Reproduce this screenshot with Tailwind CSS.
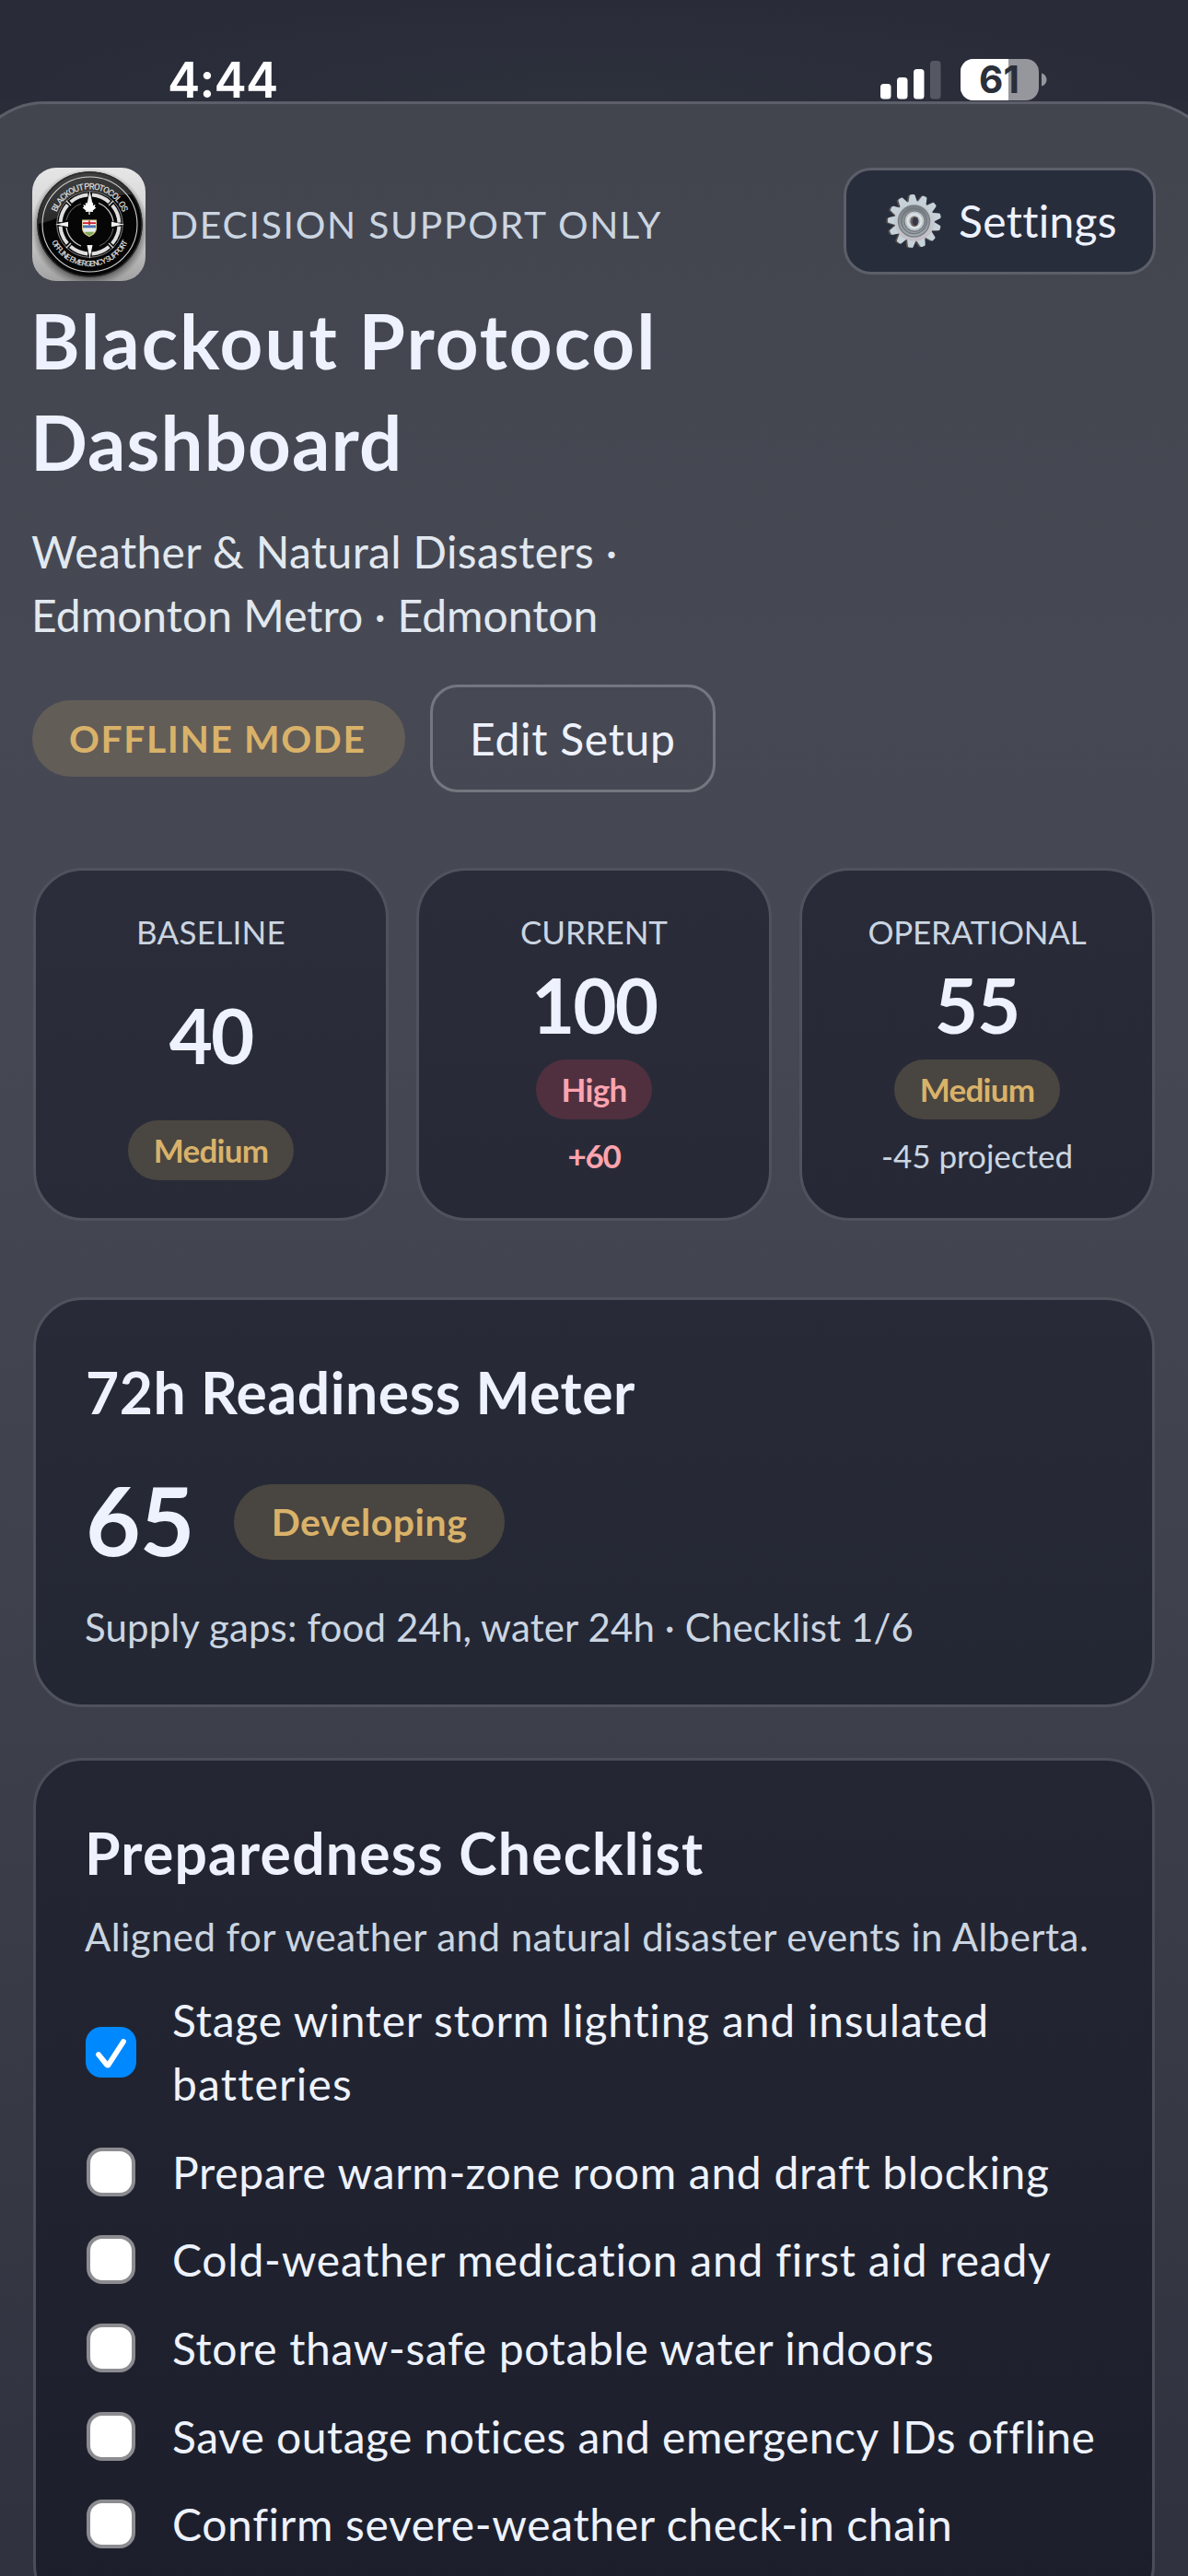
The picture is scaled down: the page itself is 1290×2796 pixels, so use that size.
<!DOCTYPE html>
<html lang="en">
<head>
<meta charset="utf-8">
<title>Blackout Protocol Dashboard</title>
<script src="https://cdn.jsdelivr.net/npm/@tailwindcss/browser@4"></script>
</head>
<body class="w-[1290px] h-[2796px] overflow-hidden bg-[linear-gradient(180deg,#2b2e39_0%,#1c1f2b_100%)] font-['Lato',sans-serif] text-[#eef2ff]">
<div class="w-[1290px] h-[2796px] overflow-hidden flex flex-col">

  <!-- Status bar -->
  <header class="h-[110px] shrink-0 flex items-end justify-between pl-[182px] pr-[152px] bg-[radial-gradient(ellipse_at_50%_100%,#2d313c_0%,#292c38_75%)]">
    <span class="font-['Inter',sans-serif] font-semibold text-[53px] leading-[46px] tracking-[-0.8px] text-white">4:44</span>
    <div class="flex items-end">
      <svg class="w-[66px] h-[42px] mb-[2.5px]" viewBox="0 0 66 42">
        <rect x="0" y="25" width="11.5" height="16.5" rx="3.5" fill="#fff"/>
        <rect x="18" y="18" width="11.5" height="23.5" rx="3.5" fill="#fff"/>
        <rect x="36" y="9" width="11.5" height="32.5" rx="3.5" fill="#fff"/>
        <rect x="54" y="0" width="11.5" height="41.5" rx="3.5" fill="#555862"/>
      </svg>
      <svg class="w-[95px] h-[45px] ml-[21px] mb-px" viewBox="0 0 95 45">
        <defs><clipPath id="bat"><rect width="85" height="45" rx="14"/></clipPath></defs>
        <g clip-path="url(#bat)"><rect width="85" height="45" fill="#95979d"/><rect width="52" height="45" fill="#fff"/></g>
        <path d="M88 15.5c3.5 1 5.500 4 5.500 7s-2 6-5.500 7z" fill="#95979d"/>
        <text x="42" y="37" text-anchor="middle" font-family="Inter" font-weight="700" font-size="40.500" fill="#2b2f3a">61</text>
      </svg>
    </div>
  </header>

  <!-- Sheet -->
  <main class="w-[1362px] h-[2900px] shrink-0 -ml-9 px-[69px] pt-[69px] rounded-t-[84px] border-[3px] border-[#5c5f69] bg-[linear-gradient(180deg,#42454e_0px,#464953_600px,#454852_1000px,#40434d_1500px,#3c3f49_1800px,#2f323e_2700px)]">
    <div class="w-[1219px]">

      <div class="flex items-start justify-between h-[123px] -ml-px">
        <div class="flex items-center gap-[26px]">
          <svg class="w-[123px] h-[123px]" viewBox="0 0 123 123">
            <defs>
              <linearGradient id="plate" x1="0" y1="0" x2="0" y2="1"><stop offset="0" stop-color="#e6e6e6"/><stop offset=".55" stop-color="#cfcfcf"/><stop offset="1" stop-color="#a2a2a2"/></linearGradient>
              <linearGradient id="gloss" x1="0" y1="0" x2=".5" y2="1"><stop offset="0" stop-color="#4a4a4a"/><stop offset="1" stop-color="#222"/></linearGradient>
              <radialGradient id="shade"><stop offset=".85" stop-color="#333" stop-opacity=".6"/><stop offset="1" stop-color="#555" stop-opacity="0"/></radialGradient>
              <clipPath id="sq"><rect width="123" height="123" rx="26"/></clipPath>
              <clipPath id="disc"><circle cx="62.500" cy="61.500" r="57"/></clipPath>
              <path id="arcT" d="M24.500 61.500a38 38 0 0 1 76 0"/>
              <path id="arcB" d="M16.900 61.500a45.600 45.600 0 0 0 91.200 0"/>
            </defs>
            <g clip-path="url(#sq)">
              <rect width="123" height="123" fill="url(#plate)"/>
              <circle cx="62.500" cy="65" r="64" fill="url(#shade)"/>
              <g clip-path="url(#disc)">
                <rect width="123" height="123" fill="#050505"/>
                <path d="M0 62C30 58 38 46 62 38S100 28 123 30V0H0z" fill="url(#gloss)"/>
              </g>
              <circle cx="62.500" cy="61.500" r="56.500" fill="none" stroke="#2a2a2a" stroke-width="1.500"/>
              <circle cx="62.500" cy="61.500" r="51.500" fill="none" stroke="#d2d2d2" stroke-width="1.100"/>
              <circle cx="62.500" cy="61.500" r="36.500" fill="#060606"/>
              <circle cx="62.500" cy="61.500" r="35.800" fill="none" stroke="#aaa" stroke-width=".8"/>
              <circle cx="62.500" cy="61.500" r="32" fill="none" stroke="#dedede" stroke-width="4" stroke-dasharray="20.600 4.530" stroke-dashoffset="-2.260"/>
              <g stroke="#ddd" stroke-width="1.400"><path d="M42 41l-5-5M83 41l5-5M42 82l-5 5M83 82l5 5"/></g>
              <path d="M72 38.500a25.500 25.500 0 0 1 16 20M53 85a25.500 25.500 0 0 1-16-20" fill="none" stroke="#ccc" stroke-width="1.300"/>
              <path d="M37 57a25.500 25.500 0 0 1 16-18M88 66a25.500 25.500 0 0 1-15 19" fill="none" stroke="#999" stroke-width=".7"/>
              <path d="M62.500 25l3 14h-6zM62.500 99l-3-15h6zM25 61.500l14-2.800v5.600zM100 61.500l-14-2.800v5.600z" fill="#f2f2f2"/>
              <path d="M62 35.500l2 3.200 2.200-.8-.3 3.200 2.600-1-.6 2.600 1.500.7-3.700 3.200.4 1.500-3.500-.4V51h-1.200v-3.300l-3.500.4.4-1.500-3.700-3.200 1.500-.7-.6-2.600 2.600 1-.3-3.200 2.200.8z" fill="#fff"/>
              <path d="M54 56.500h16v9c0 5-4 8-8 9.700-4-1.700-8-4.700-8-9.700z" fill="#d8c98a"/>
              <path d="M55 57.500h14v5H55z" fill="#f6eeee"/><path d="M55 59.300h14v1.600H55zM61.200 57.500h1.700v5h-1.700z" fill="#d01f2c"/>
              <path d="M55 62.500h14v3H55z" fill="#4d74b8"/><path d="M55 65.500h14c0 2-.6 3.200-1.500 4.300h-11c-.9-1.100-1.500-2.300-1.500-4.300z" fill="#e8eef2"/><path d="M56.700 69.800h10.700c-1.400 2-3.400 3.300-5.400 4.200-2-.9-4-2.200-5.300-4.200z" fill="#7fa85a"/>
              <g font-family="Roboto" font-weight="500" fill="#d4d4d4" text-anchor="middle">
                <text font-size="9.600"><textPath href="#arcT" startOffset="50%" textLength="93">BLACKOUT PROTOCOL OS</textPath></text>
                <text font-size="8.600"><textPath href="#arcB" startOffset="50%" textLength="104">OFFLINE EMERGENCY SUPPORT</textPath></text>
              </g>
            </g>
          </svg>
          <span class="text-[40.8px] leading-[60px] tracking-[1.75px] text-[#cbd5e1]">DECISION SUPPORT ONLY</span>
        </div>
        <button class="w-[339px] h-[116px] rounded-[30px] border-[3px] border-[#5c5f69] bg-[#282d3c] flex items-center pl-[43px]">
          <svg class="w-[60px] h-[60px] shrink-0" viewBox="0 0 60 60">
            <defs>
              <linearGradient id="metal" gradientUnits="userSpaceOnUse" x1="0" y1="0" x2="0" y2="60"><stop offset="0" stop-color="#c6d3da"/><stop offset=".5" stop-color="#c6cad1"/><stop offset="1" stop-color="#bfb8be"/></linearGradient>
              <linearGradient id="dish" x1="0" y1="0" x2="0" y2="1"><stop offset="0" stop-color="#777d82"/><stop offset="1" stop-color="#a3abb0"/></linearGradient>
              <linearGradient id="hub" x1="0" y1="0" x2="0" y2="1"><stop offset="0" stop-color="#c3c9ce"/><stop offset="1" stop-color="#b9c3ca"/></linearGradient>
              <g id="teeth"></g>
            </defs>
            <use href="#teeth" x="-1.800" y=".3" fill="#57514f"/>
            <use href="#teeth" fill="url(#metal)"/>
            <circle cx="31" cy="30" r="21.800" fill="url(#metal)"/>
            <circle cx="30.500" cy="30" r="17.800" fill="#7b8287"/>
            <circle cx="30.500" cy="30" r="16.300" fill="url(#dish)"/>
            <circle cx="30.500" cy="30" r="13.600" fill="none" stroke="#70777c" stroke-width="1.300"/>
            <circle cx="31" cy="30.500" r="11.300" fill="#6f7478"/>
            <circle cx="31" cy="30" r="10.500" fill="url(#hub)"/>
            <circle cx="31" cy="30" r="7.500" fill="none" stroke="#dfe4e8" stroke-width="2"/>
            <ellipse cx="31" cy="30.300" rx="4.600" ry="5.600" fill="#6d5f56"/>
            <ellipse cx="31.800" cy="30.300" rx="3" ry="4.400" fill="#34384a"/>
          </svg>
          <span class="ml-[19px] text-[48px] leading-[60px] tracking-[0.29px]">Settings</span>
        </button>
      </div>

      <h1 class="mt-[9px] -ml-[3px] text-[81.6px] leading-[110px] font-bold"><span class="tracking-[2px]">Blackout Protocol</span><br><span class="tracking-[1.09px]">Dashboard</span></h1>
      <p class="mt-[30px] -ml-[2px] text-[48px] leading-[69px] text-[#e2e8f0]"><span class="tracking-[0.34px]">Weather &amp; Natural Disasters ·</span><br><span class="tracking-[0.02px]">Edmonton Metro · Edmonton</span></p>

      <div class="mt-[41px] h-[117px] flex items-center gap-[27px]">
        <span class="w-[405px] h-[83px] -ml-px rounded-[42px] bg-[#635d58] flex items-center pl-[40px] text-[40.8px] font-bold tracking-[1.6px] text-[#d9b26a]">OFFLINE MODE</span>
        <button class="w-[310px] h-[117px] rounded-[30px] border-[3px] border-[#74777f] flex items-center pl-[40px] text-[48px] tracking-[0.71px]">Edit Setup</button>
      </div>

      <section class="mt-[82px] grid grid-cols-3 gap-[30px] w-[1218px] h-[383px] text-center text-[35px] leading-[42px]">
        <div class="rounded-[54px] border-[3px] border-[#50535e] bg-[linear-gradient(180deg,#2b2e3a,#282b37)] pt-[45px] flex flex-col items-center">
          <div class="tracking-[0.26px] text-[#cbd5e1]">BASELINE</div>
          <div class="mt-[50px] text-[81.600px] leading-[82px] font-bold tracking-[-2px]">40</div>
          <div class="mt-[52px] w-[180px] h-[65px] leading-[64px] rounded-full bg-[#4a4641] font-bold tracking-[-0.74px] text-[#d9b26a]">Medium</div>
        </div>
        <div class="rounded-[54px] border-[3px] border-[#50535e] bg-[linear-gradient(180deg,#2a2d39,#272a36)] pt-[45px] flex flex-col items-center">
          <div class="tracking-[-0.1px] text-[#cbd5e1]">CURRENT</div>
          <div class="mt-[17px] text-[81.600px] leading-[82px] font-bold tracking-[-2px]">100</div>
          <div class="mt-[19px] w-[126px] h-[65px] leading-[64px] rounded-full bg-[#50303f] font-bold tracking-[-0.7px] text-[#fda4af]">High</div>
          <div class="mt-[18px] font-bold tracking-[-1.3px] text-[#fda4af]">+60</div>
        </div>
        <div class="rounded-[54px] border-[3px] border-[#50535e] bg-[linear-gradient(180deg,#292c38,#262935)] pt-[45px] flex flex-col items-center">
          <div class="tracking-[-0.2px] text-[#cbd5e1]">OPERATIONAL</div>
          <div class="mt-[17px] text-[81.600px] leading-[82px] font-bold tracking-[-1px]">55</div>
          <div class="mt-[19px] w-[180px] h-[65px] leading-[64px] rounded-full bg-[#494540] font-bold tracking-[-0.74px] text-[#d9b26a]">Medium</div>
          <div class="mt-[18px] text-[#cbd5e1]">-45 projected</div>
        </div>
      </section>

      <section class="mt-[83px] w-[1218px] h-[445px] rounded-[54px] border-[3px] border-[#50535e] bg-[linear-gradient(180deg,#282b37,#232733)] pt-[58px] pl-[54px]">
        <h2 class="text-[62.400px] leading-[84px] font-bold tracking-[0.57px]">72h Readiness Meter</h2>
        <div class="mt-[57px] h-[83px] flex items-center">
          <span class="w-[161px] mt-[-4px] text-[103px] leading-[103px] font-bold tracking-[-1px]">65</span>
          <span class="w-[294px] h-[82px] rounded-full bg-[#494540] flex items-center justify-center text-[41px] font-bold tracking-[0.53px] text-[#d9b26a]">Developing</span>
        </div>
        <p class="mt-[43px] -ml-px text-[42px] leading-[60px] tracking-[0.12px] text-[#cbd5e1] whitespace-nowrap">Supply gaps: food 24h, water 24h · Checklist 1/6</p>
      </section>

      <section class="mt-[55px] w-[1218px] h-[930px] rounded-[54px] border-[3px] border-[#4b4e59] bg-[linear-gradient(180deg,#242733,#1c1f2b)] pt-[58px] pl-[54px]">
        <h2 class="text-[62.400px] leading-[84px] font-bold tracking-[1.22px] -ml-px">Preparedness Checklist</h2>
        <p class="mt-[19px] -ml-px text-[42px] leading-[60px] tracking-[0.44px] text-[#cbd5e1] whitespace-nowrap">Aligned for weather and natural disaster events in Alberta.</p>
        <ul class="mt-[26px] flex flex-col gap-[26.700px] text-[48px] leading-[69px] whitespace-nowrap">
          <li class="flex items-center gap-[39px]">
            <svg class="w-[55px] h-[55px] shrink-0" viewBox="0 0 55 55"><rect width="55" height="55" rx="17" fill="#0088ff"/><path d="M14 30l9.200 11.300q.8.800 1.500 0L41 16" fill="none" stroke="#fff" stroke-width="5.800" stroke-linecap="round" stroke-linejoin="round"/></svg>
            <span><span class="tracking-[0.77px]">Stage winter storm lighting and insulated</span><br><span class="tracking-[1.2px]">batteries</span></span>
          </li>
          <li class="flex items-center gap-[39px]"><i class="w-[53px] h-[53px] mx-px rounded-[17px] border-[4px] border-[#8c8c90] bg-white"></i><span class="tracking-[0.68px]">Prepare warm-zone room and draft blocking</span></li>
          <li class="flex items-center gap-[39px]"><i class="w-[53px] h-[53px] mx-px rounded-[17px] border-[4px] border-[#8c8c90] bg-white"></i><span class="tracking-[0.77px]">Cold-weather medication and first aid ready</span></li>
          <li class="flex items-center gap-[39px]"><i class="w-[53px] h-[53px] mx-px rounded-[17px] border-[4px] border-[#8c8c90] bg-white"></i><span class="tracking-[0.63px]">Store thaw-safe potable water indoors</span></li>
          <li class="flex items-center gap-[39px]"><i class="w-[53px] h-[53px] mx-px rounded-[17px] border-[4px] border-[#8c8c90] bg-white"></i><span class="tracking-[0.46px]">Save outage notices and emergency IDs offline</span></li>
          <li class="flex items-center gap-[39px]"><i class="w-[53px] h-[53px] mx-px rounded-[17px] border-[4px] border-[#8c8c90] bg-white"></i><span class="tracking-[0.65px]">Confirm severe-weather check-in chain</span></li>
        </ul>
      </section>
    </div>
  </main>
</div>
<script>
  // Gear teeth, evenly spaced round the hub
  const teeth = document.getElementById('teeth');
  for (let i = 0; i < 13; i++) {
    const p = document.createElementNS('http://www.w3.org/2000/svg', 'path');
    p.setAttribute('d', 'M26 10l2-7.500q.3-1.500 1.600-1.500h2.800q1.300 0 1.600 1.500L36 10z');
    p.setAttribute('transform', `rotate(${i * 360 / 13 - 5} 31 30)`);
    teeth.appendChild(p);
  }
</script>
</body>
</html>
